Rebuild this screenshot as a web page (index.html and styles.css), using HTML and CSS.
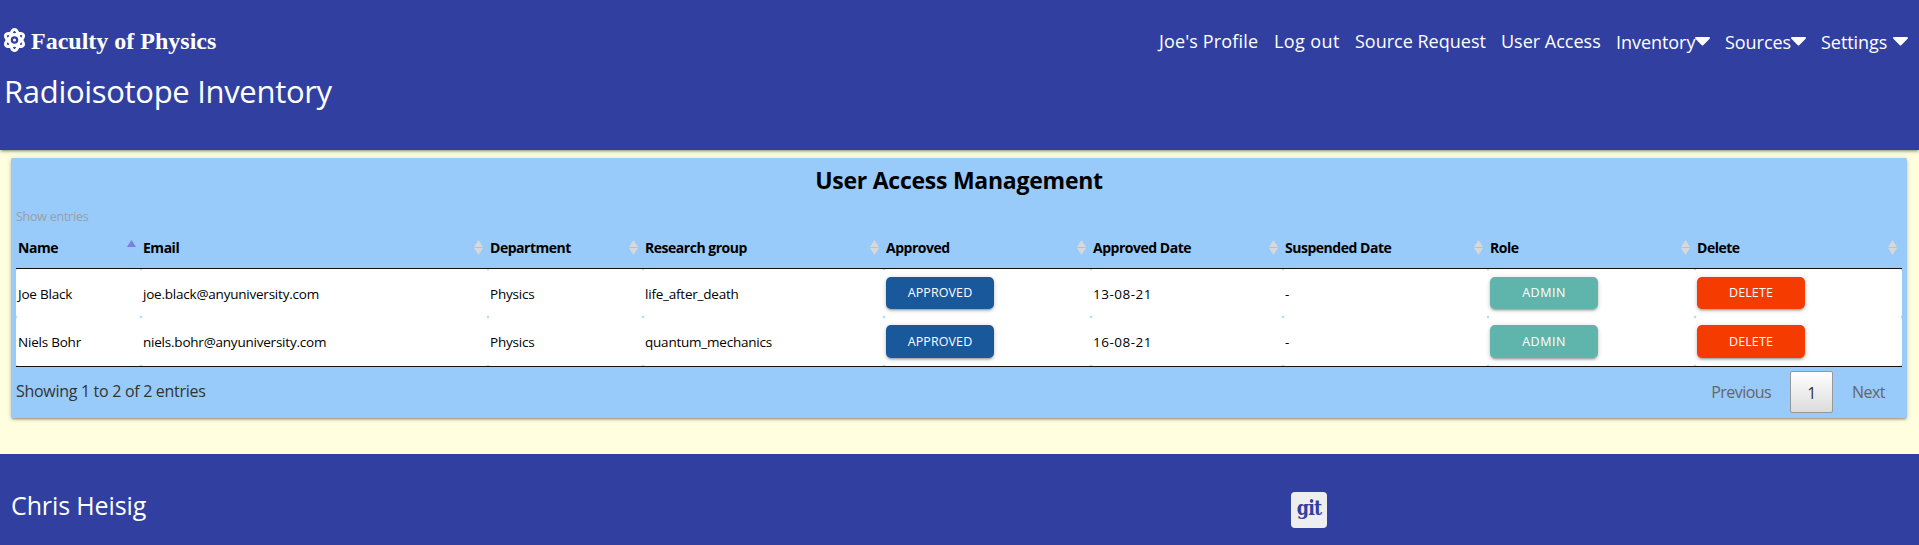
FILE: index.html
```
<!DOCTYPE html>
<html lang="en">
<head>
<meta charset="utf-8">
<title>User Access Management</title>
<link rel="stylesheet" href="styles.css">
</head>
<body>
<svg class="defs" aria-hidden="true">
  <symbol id="caret" viewBox="0 0 15 9"><path d="M1.1 0h12.8c.9 0 1.4 1 .7 1.7L8.2 8.2a1 1 0 0 1-1.4 0L.4 1.7C-.3 1 .2 0 1.1 0z"/></symbol>
  <symbol id="sort" viewBox="0 0 9 15"><path d="M0 7 4.5 0 9 7zM0 8h9l-4.500 7z"/></symbol>
</svg>

<header class="site-header">
  <div class="top-row">
    <a class="brand">
      <svg class="atom" viewBox="0 0 448 512"><path d="M224 224a32 32 0 1 0 32 32A32 32 0 0 0 224 224Zm214.172-96c-10.877-19.5-40.51-50.75-116.275-41.875C300.392 34.875 267.634 0 224 0s-76.39 34.875-97.897 86.125C50.337 77.375 20.706 108.5 9.829 128-6.55 157.375-5.175 201.125 34.958 256-5.175 310.875-6.55 354.625 9.829 384c29.131 52.375 101.647 43.625 116.274 41.875C147.608 477.125 180.364 512 224 512s76.393-34.875 97.897-86.125c14.629 1.750 87.144 10.500 116.275-41.875C454.550 354.625 453.175 310.875 413.040 256 453.175 201.125 454.550 157.375 438.171 128ZM63.339 352c-4-7.250-.125-24.750 15.004-48.250 6.877 6.500 14.129 12.875 21.881 19.125 1.625 13.750 4 27.125 6.750 40.125C82.345 363.875 67.091 358.625 63.339 352Zm36.885-162.875c-7.752 6.250-15.004 12.625-21.881 19.125-15.129-23.500-19.004-41-15.004-48.250 3.377-6.125 16.379-11.500 37.885-11.500 1.750 0 3.875.375 5.750.375C104.099 162.250 101.849 175.625 100.224 189.125ZM224 64c9.502 0 22.256 13.500 33.883 37.250-11.252 3.750-22.504 8-33.883 12.875-11.377-4.875-22.629-9.125-33.883-12.875C201.745 77.500 214.497 64 224 64Zm0 384c-9.502 0-22.254-13.500-33.883-37.250 11.254-3.750 22.506-8 33.883-12.875C235.378 402.750 246.630 407 257.882 410.750 246.255 434.500 233.501 448 224 448Zm0-112a80 80 0 1 1 80-80A80 80 0 0 1 224 336ZM384.659 352c-3.625 6.625-19.004 11.875-43.635 11 2.752-13 5.127-26.375 6.752-40.125 7.752-6.250 15.004-12.625 21.879-19.125C384.784 327.250 388.659 344.750 384.659 352ZM369.655 208.250c-6.875-6.500-14.127-12.875-21.879-19.125-1.625-13.500-3.875-26.875-6.752-40.250 1.875 0 4.002-.375 5.752-.375 21.504 0 34.508 5.375 37.883 11.500C388.659 167.250 384.784 184.750 369.655 208.250Z"/></svg>
      <span>Faculty of Physics</span>
    </a>
    <nav class="nav">
      <a class="wide">Joe's Profile</a>
      <a class="loose">Log out</a>
      <a>Source Request</a>
      <a>User Access</a>
      <a class="menu">Inventory<svg class="caret"><use href="#caret"/></svg></a>
      <a class="menu">Sources<svg class="caret"><use href="#caret"/></svg></a>
      <a class="menu spaced">Settings<svg class="caret"><use href="#caret"/></svg></a>
    </nav>
  </div>
  <div class="site-title">Radioisotope Inventory</div>
</header>

<main class="card">
  <h1 class="card-title">User Access Management</h1>
  <div class="length">Show entries</div>
  <table class="users">
    <colgroup><col class="c-name"><col class="c-email"><col class="c-dept"><col class="c-group"><col class="c-approved"><col class="c-adate"><col class="c-sdate"><col class="c-role"><col class="c-delete"></colgroup>
    <thead>
      <tr>
        <th><div class="head">Name<svg class="sort asc" viewBox="0 0 9 15"><path d="M0 7 4.500 0 9 7z"/></svg></div></th>
        <th><div class="head">Email<svg class="sort"><use href="#sort"/></svg></div></th>
        <th><div class="head">Department<svg class="sort"><use href="#sort"/></svg></div></th>
        <th><div class="head">Research group<svg class="sort"><use href="#sort"/></svg></div></th>
        <th><div class="head">Approved<svg class="sort"><use href="#sort"/></svg></div></th>
        <th><div class="head">Approved Date<svg class="sort"><use href="#sort"/></svg></div></th>
        <th><div class="head">Suspended Date<svg class="sort"><use href="#sort"/></svg></div></th>
        <th><div class="head">Role<svg class="sort"><use href="#sort"/></svg></div></th>
        <th><div class="head">Delete<svg class="sort"><use href="#sort"/></svg></div></th>
      </tr>
    </thead>
    <tbody>
      <tr>
        <td>Joe Black</td><td>joe.black@anyuniversity.com</td><td>Physics</td><td>life_after_death</td>
        <td><button class="btn blue">APPROVED</button></td><td class="date">13-08-21</td><td>-</td>
        <td><button class="btn teal">ADMIN</button></td><td><button class="btn red">DELETE</button></td>
      </tr>
      <tr>
        <td>Niels Bohr</td><td>niels.bohr@anyuniversity.com</td><td>Physics</td><td>quantum_mechanics</td>
        <td><button class="btn blue">APPROVED</button></td><td class="date">16-08-21</td><td>-</td>
        <td><button class="btn teal">ADMIN</button></td><td><button class="btn red">DELETE</button></td>
      </tr>
    </tbody>
  </table>
  <div class="table-foot">
    <div class="info">Showing 1 to 2 of 2 entries</div>
    <div class="pager"><a>Previous</a><a class="current">1</a><a>Next</a></div>
  </div>
</main>

<footer class="site-footer">
  <div class="author">Chris Heisig</div>
  <a class="git">git</a>
</footer>
</body>
</html>
```
FILE: styles.css
```
* { box-sizing: border-box; }
html { overflow: hidden; }
body {
  margin: 0;
  height: 545px;
  display: flex;
  flex-direction: column;
  background: #ffffe0;
  font-family: "Open Sans", "Noto Sans", sans-serif;
  color: #000;
}
.defs { position: absolute; width: 0; height: 0; }

.site-header {
  height: 150px;
  flex: none;
  padding: 21px 0 0 4px;
  background: #3140a0;
  color: #fff;
  box-shadow: 0 2px 2px 0 rgba(0,0,0,.14), 0 3px 1px -2px rgba(0,0,0,.12), 0 1px 5px 0 rgba(0,0,0,.2);
}
.top-row { display: flex; justify-content: space-between; height: 40px; }
.brand {
  display: flex;
  align-items: center;
  gap: 6px;
  font: bold 24px/40px "Liberation Serif", serif;
}
.atom { width: 21px; height: 24px; fill: #fff; margin-top: -2px; }
.nav {
  display: grid;
  grid-template-columns: 115px 81px 146px 115px 109px 96px 98px;
  font-size: 18px;
  line-height: 40px;
  white-space: nowrap;
}
.wide { letter-spacing: .15px; }
.loose { letter-spacing: .4px; }
.menu { display: flex; align-items: center; height: 42px; letter-spacing: -.05px; }
.caret { width: 15px; height: 9px; fill: #fff; margin-top: -2px; }
.spaced .caret { margin-left: 6px; }
.site-title {
  height: 60px;
  font-size: 31px;
  line-height: 60px;
  letter-spacing: -.31px;
}

.card {
  height: 260px;
  flex: none;
  margin: 8px 12px 0 11px;
  padding: 0 5px;
  border-radius: 2px;
  background: #98cafa;
  box-shadow: 0 2px 2px 0 rgba(0,0,0,.14), 0 3px 1px -2px rgba(0,0,0,.12), 0 1px 5px 0 rgba(0,0,0,.2);
}
.card-title {
  margin: 0;
  text-align: center;
  font-size: 23px;
  font-weight: bold;
  line-height: 45px;
  letter-spacing: -.25px;
}
.length {
  height: 24px;
  font-size: 12.5px;
  line-height: 28px;
  letter-spacing: -.25px;
  color: #9e9e9e;
}
.users {
  width: 1886px;
  table-layout: fixed;
  border-spacing: 0;
  border-bottom: 1px solid #111;
}
.c-name { width: 125px; }
.c-email { width: 347px; }
.c-dept { width: 155px; }
.c-group { width: 241px; }
.c-approved { width: 207px; }
.c-adate { width: 192px; }
.c-sdate { width: 205px; }
.c-role { width: 207px; }
.c-delete { width: 207px; }
.users th {
  height: 42px;
  padding: 0 5.5px 0 2px;
  border-bottom: 1px solid #111;
  font-size: 14px;
  text-align: left;
  letter-spacing: -.48px;
}
.head { display: flex; justify-content: space-between; align-items: center; line-height: 20px; }
.sort { width: 9px; height: 15px; fill: #d8d8d8; }
.asc { fill: #7b80de; }
.users td {
  height: 48px;
  padding: 1px 0 0 2px;
  border-radius: 2px;
  background: #fff;
  font-size: 13.5px;
  line-height: 18px;
  letter-spacing: -.22px;
}
.users tr:last-child td { height: 49px; }
.users td.date { letter-spacing: .5px; }
.btn {
  display: block;
  width: 108px;
  height: 32px;
  margin: 0 0 1px;
  padding: 0;
  border: 0;
  border-radius: 5px;
  color: #fff;
  font: 12.5px/32px "Open Sans", sans-serif;
  letter-spacing: .1px;
  box-shadow: 0 2px 2px 0 rgba(0,0,0,.14), 0 3px 1px -2px rgba(0,0,0,.12), 0 1px 5px 0 rgba(0,0,0,.2);
}
.users tr:last-child .btn { height: 33px; }
.blue { background: #1a589c; }
.teal { background: #5fb5ac; letter-spacing: .5px; }
.red { background: #f63b00; }

.table-foot { display: flex; justify-content: space-between; align-items: flex-start; }
.info { font-size: 16px; line-height: 49px; letter-spacing: -.3px; color: #333; }
.pager {
  display: flex;
  gap: 19px;
  padding: 4px 17px 0 0;
  font-size: 16px;
  line-height: 42px;
  letter-spacing: -.55px;
  color: #666;
}
.current {
  width: 43px;
  height: 42px;
  border: 1px solid #979797;
  border-radius: 2px;
  background: linear-gradient(#fff, #dcdcdc);
  color: #333;
  text-align: center;
}

.site-footer {
  flex: 1;
  display: flex;
  align-items: flex-start;
  margin-top: 36px;
  padding: 31px 0 0 11px;
  background: #3140a0;
  color: #fff;
}
.author { width: 1280px; font-size: 25px; line-height: 40px; letter-spacing: -.12px; }
.git {
  width: 36px;
  height: 36px;
  margin-top: 7px;
  border-radius: 4px;
  background: #eee;
  color: #3140a0;
  text-align: center;
  font: bold 19.5px/34px "DejaVu Serif Condensed", "DejaVu Serif", serif;
  font-stretch: condensed;
  letter-spacing: -.8px;
}
```
